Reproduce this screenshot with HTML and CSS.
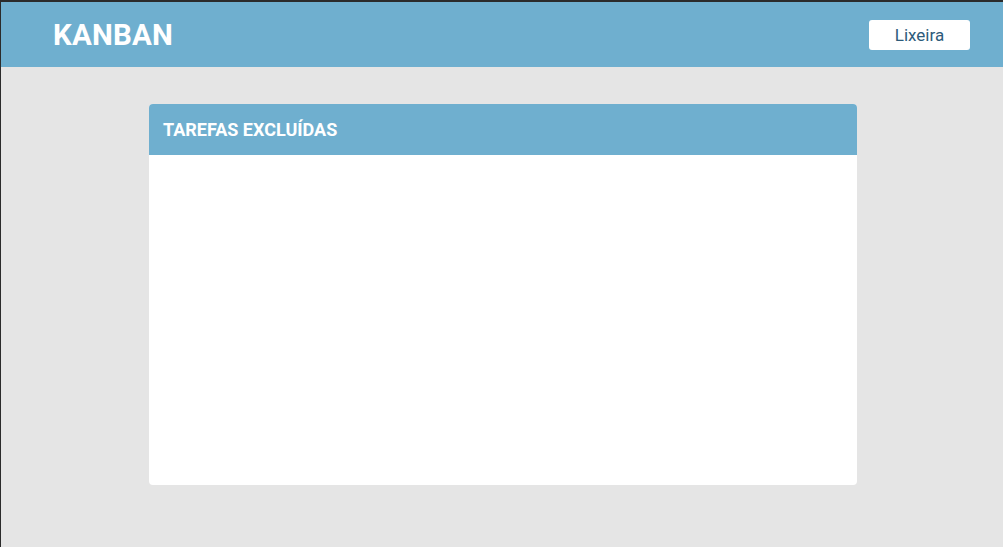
FILE: index.html
```html
<!DOCTYPE html>
<html lang="pt">
<head>
<meta charset="utf-8">
<title>Kanban</title>
<link rel="stylesheet" href="styles.css">
</head>
<body>
<header class="topbar">
  <h1 class="logo">KANBAN</h1>
  <button class="trash-btn">Lixeira</button>
</header>
<main class="content">
  <section class="card">
    <div class="card-header">TAREFAS EXCLUÍDAS</div>
    <div class="card-body"></div>
  </section>
</main>
</body>
</html>
```
FILE: styles.css
```css
* { box-sizing: border-box; }
html, body { margin: 0; padding: 0; height: 100%; }
body {
  background: #e5e5e5;
  font-family: Roboto, "Liberation Sans", sans-serif;
  border-top: 2px solid #2b2b2b;
  border-left: 1px solid #2b2b2b;
  min-height: 547px;
}
.topbar {
  height: 65px;
  background: #6fafcf;
  display: flex;
  align-items: center;
  justify-content: space-between;
  padding: 0 33px 0 52px;
}
.logo {
  margin: 0;
  color: #fff;
  font-size: 29.5px;
  font-weight: 700;
  letter-spacing: 0.2px;
}
.trash-btn {
  width: 101px;
  height: 30px;
  background: #fff;
  border: none;
  border-radius: 3px;
  color: #2d5b7a;
  font-family: Roboto, "Liberation Sans", sans-serif;
  font-size: 17px;
  padding: 0;
}
.content {
  display: flex;
  justify-content: flex-start;
  padding: 37px 0 0 148px;
}
.card {
  width: 708px;
  height: 381px;
  background: #fff;
  border-radius: 4px;
  overflow: hidden;
  display: flex;
  flex-direction: column;
}
.card-header {
  height: 51px;
  background: #6fafcf;
  color: #fff;
  font-weight: 700;
  font-size: 18px;
  display: flex;
  align-items: center;
  padding-left: 14px;
}
.card-body { flex: 1; }
```
